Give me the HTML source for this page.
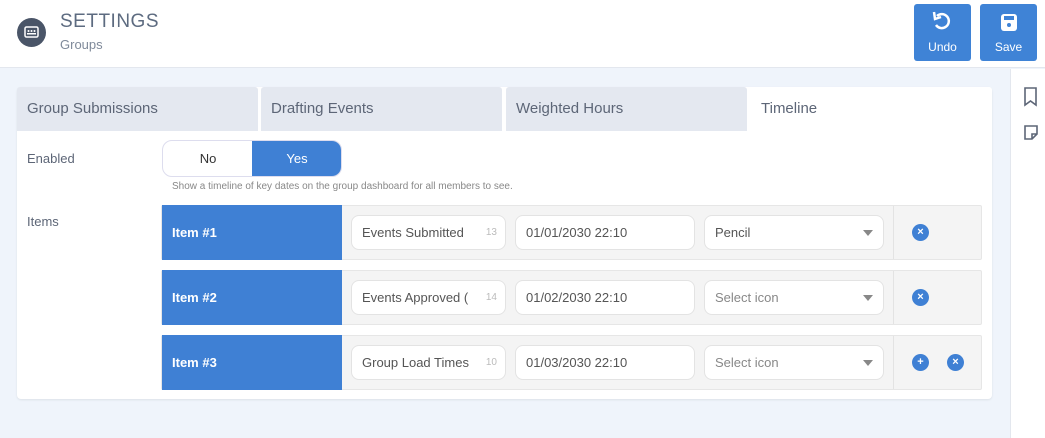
<!DOCTYPE html>
<html><head><style>
*{box-sizing:border-box;margin:0;padding:0}
body{width:1045px;height:438px;overflow:hidden;background:#eff4fb;font-family:"Liberation Sans",sans-serif;position:relative;color:#555}
.hdr{position:absolute;left:0;top:0;width:1045px;height:68px;background:#fff;border-bottom:1px solid #e3e7ee}
.logo{position:absolute;left:17px;top:18px;width:29px;height:29px;border-radius:50%;background:#4a5568}
.t1{position:absolute;left:60px;top:11px;font-size:19px;color:#5d6b80;letter-spacing:.5px}
.t2{position:absolute;left:60px;top:37px;font-size:13px;color:#7f8a9a}
.btn{position:absolute;top:4px;width:57px;height:57px;background:#3f83d6;border-radius:3px;color:#fff;font-size:12px;text-align:center}
.btn span{position:absolute;left:0;right:0;top:36px}
.side{position:absolute;left:1010px;top:69px;width:35px;height:369px;background:#fff;border-left:1px solid #e3e7ee}
.card{position:absolute;left:17px;top:87px;width:975px;height:312px;background:#fff;border-radius:4px;box-shadow:0 1px 2px rgba(0,0,0,.08)}
.tab{position:absolute;top:0;height:44px;background:#e4e8f0;font-size:15px;color:#5d6677;padding:13px 10px;border-radius:3px 3px 0 0}
.lbl{position:absolute;left:10px;font-size:13px;color:#5d6677}
.tog{position:absolute;left:145px;top:53px;width:180px;height:37px;border:1px solid #dde;border-radius:10px;overflow:hidden;font-size:13px}
.tog div{position:absolute;top:0;height:37px;line-height:35px;text-align:center;width:90px}
.hint{position:absolute;left:155px;top:94px;font-size:10px;color:#888}
.row{position:absolute;left:144px;width:821px;height:55px;background:#f4f4f4;border:1px solid #e6e6e6;border-radius:2px}
.il{position:absolute;left:0;top:-1px;width:180px;height:55px;background:#3f80d4;color:#fff;font-weight:bold;font-size:13px;line-height:55px;padding-left:10px}
.in{position:absolute;top:9px;height:35px;background:#fff;border:1px solid #e3e3e3;border-radius:8px;font-size:13px;line-height:33px;padding-left:10px;color:#555;white-space:nowrap;overflow:hidden}
.cnt{position:absolute;right:8px;top:0;color:#bbb;font-size:10px}
.arr{position:absolute;right:10px;top:14px;border:5px solid transparent;border-top:6px solid #888}
.dv{position:absolute;left:731px;top:0;width:1px;height:53px;background:#e3e3e3}
.c{position:absolute;top:18px;width:17px;height:17px;border-radius:50%;background:#3f80d4;color:#fff;font-size:11px;line-height:17px;text-align:center;font-weight:bold}
</style></head><body>
<div class="hdr">
<div class="logo"><svg width="29" height="29"><rect x="8" y="9" width="13" height="10" rx="1.5" fill="none" stroke="#fff" stroke-width="1.5"/><circle cx="11.5" cy="13" r="1" fill="#fff"/><circle cx="14.5" cy="13" r="1" fill="#fff"/><circle cx="17.5" cy="13" r="1" fill="#fff"/><rect x="10" y="15" width="9" height="1.5" fill="#fff"/></svg></div>
<div class="t1">SETTINGS</div><div class="t2">Groups</div>
<div class="btn" style="left:914px"><svg width="57" height="36"><path d="M23 12 A7 7 0 1 1 22 21" fill="none" stroke="#fff" stroke-width="2.5"/><path d="M20 8 L21 15 L27 13" fill="none" stroke="#fff" stroke-width="2.5"/></svg><span>Undo</span></div>
<div class="btn" style="left:980px"><svg width="57" height="36"><rect x="21" y="10" width="16" height="17" rx="3" fill="#fff"/><rect x="24" y="12" width="10" height="4" fill="#3f83d6"/><circle cx="29" cy="21" r="2" fill="#3f83d6"/></svg><span>Save</span></div>
</div>
<div class="side"><svg width="35" height="80"><path d="M14 19 h11 v17 l-5.5-4 l-5.5 4z" fill="none" stroke="#5d6677" stroke-width="1.6"/><path d="M14 57 h12 v8 l-5 5 h-7z M26 65 h-5 v5" fill="none" stroke="#5d6677" stroke-width="1.6"/></svg></div>
<div class="card">
<div class="tab" style="left:0;width:241px">Group Submissions</div>
<div class="tab" style="left:244px;width:241px">Drafting Events</div>
<div class="tab" style="left:489px;width:241px">Weighted Hours</div>
<div class="tab" style="left:734px;width:241px;background:#fff">Timeline</div>
<div class="lbl" style="top:64px">Enabled</div>
<div class="tog"><div style="left:0;color:#333">No</div><div style="left:89px;background:#3f80d4;color:#fff">Yes</div></div>
<div class="hint">Show a timeline of key dates on the group dashboard for all members to see.</div>
<div class="lbl" style="top:127px">Items</div>
<div class="row" style="top:118px"><div class="il">Item #1</div>
<div class="in" style="left:189px;width:155px">Events Submitted<span class="cnt">13</span></div>
<div class="in" style="left:353px;width:180px">01/01/2030 22:10</div>
<div class="in" style="left:542px;width:180px">Pencil<span class="arr"></span></div>
<div class="dv"></div><div class="c" style="left:750px">×</div></div>
<div class="row" style="top:183px"><div class="il">Item #2</div>
<div class="in" style="left:189px;width:155px">Events Approved (<span class="cnt" style="background:#fff;padding-left:6px">14</span></div>
<div class="in" style="left:353px;width:180px">01/02/2030 22:10</div>
<div class="in" style="left:542px;width:180px;color:#888">Select icon<span class="arr"></span></div>
<div class="dv"></div><div class="c" style="left:750px">×</div></div>
<div class="row" style="top:248px"><div class="il">Item #3</div>
<div class="in" style="left:189px;width:155px">Group Load Times<span class="cnt" style="background:#fff;padding-left:6px">10</span></div>
<div class="in" style="left:353px;width:180px">01/03/2030 22:10</div>
<div class="in" style="left:542px;width:180px;color:#888">Select icon<span class="arr"></span></div>
<div class="dv"></div><div class="c" style="left:750px">+</div><div class="c" style="left:785px">×</div></div>
</div>
</body></html>
